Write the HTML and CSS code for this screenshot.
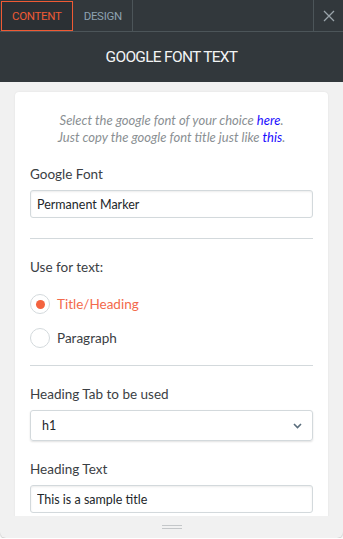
FILE: index.html
```html
<!DOCTYPE html>
<html lang="en">
<head>
    <meta charset="UTF-8">
    <meta name="viewport" content="width=device-width, initial-scale=1.0">
    <title>Google Font Text</title>
    <link rel="stylesheet" href="styles.css">
</head>
<body>
    <div class="panel">
        <div class="tab-bar">
            <button class="tab active">CONTENT</button>
            <button class="tab">DESIGN</button>
            <div class="tab-spacer"></div>
            <button class="close-btn" aria-label="Close">
                <svg width="12" height="12" viewBox="0 0 12 12">
                    <path d="M1 1L11 11M11 1L1 11" stroke="#9aa4aa" stroke-width="1.3" fill="none"/>
                </svg>
            </button>
        </div>
        <div class="panel-title">GOOGLE FONT TEXT</div>

        <div class="panel-body">
            <div class="card">
                <p class="hint">
                    Select the google font of your choice <a href="#">here</a>.<br>
                    Just copy the google font title just like <a href="#">this</a>.
                </p>

                <div class="field">
                    <label class="field-label">Google Font</label>
                    <input type="text" class="text-input" value="Permanent Marker">
                </div>

                <hr class="divider">

                <div class="field field-radios">
                    <label class="field-label">Use for text:</label>
                    <div class="radio-list">
                        <label class="radio checked"><span class="radio-dot"></span>Title/Heading</label>
                        <label class="radio"><span class="radio-dot"></span>Paragraph</label>
                    </div>
                </div>

                <hr class="divider">

                <div class="field">
                    <label class="field-label">Heading Tab to be used</label>
                    <div class="select">
                        <span>h1</span>
                        <svg width="9" height="6" viewBox="0 0 9 6">
                            <path d="M1 1L4.5 4.5L8 1" stroke="#5a6d7c" stroke-width="1.6" fill="none"/>
                        </svg>
                    </div>
                </div>

                <div class="field">
                    <label class="field-label">Heading Text</label>
                    <input type="text" class="text-input" value="This is a sample title">
                </div>
            </div>
        </div>

        <div class="panel-footer">
            <span class="handle"></span>
        </div>
    </div>
</body>
</html>
```

FILE: styles.css
```css
body {
    margin: 0;
    background: #ffffff;
    font-family: Lato, "Open Sans", sans-serif;
}
.panel {
    width: 343px;
    height: 538px;
    display: flex;
    flex-direction: column;
    background: #f1f1f1;
    border-radius: 0 0 6px 6px;
    box-shadow: 0 1px 2px rgba(0, 0, 0, 0.25);
    overflow: hidden;
}
.tab-bar {
    display: flex;
    height: 32px;
    background: #32383c;
    border-bottom: 1px solid #4c5559;
    box-sizing: border-box;
}
.tab {
    border: none;
    background: none;
    font-family: Roboto, sans-serif;
    font-size: 11.5px;
    letter-spacing: -0.3px;
    color: #8ea2b0;
    padding: 0 10px;
    border-right: 1px solid #4c5559;
    cursor: pointer;
}
.tab.active {
    color: #ef5a34;
    border: 1px solid #ef5a34;
    margin: 1px 1px 0 1px;
    height: 30px;
    background: #2b3034;
}
.tab-spacer {
    flex: 1;
}
.close-btn {
    width: 30px;
    border: none;
    border-left: 1px solid #4c5559;
    background: none;
    display: flex;
    align-items: center;
    justify-content: center;
    padding: 0;
}
.panel-title {
    height: 50px;
    background: #32383c;
    color: #f2f4f5;
    font-family: Roboto, sans-serif;
    font-size: 15.5px;
    letter-spacing: -0.7px;
    display: flex;
    align-items: center;
    justify-content: center;
}
.panel-body {
    flex: 1;
    overflow: hidden;
    padding: 10px 15px 0;
}
.card {
    background: #ffffff;
    border-radius: 4px;
    box-shadow: 0 0 2px rgba(0, 0, 0, 0.08);
    padding: 20px 15px 20px;
}
.hint {
    margin: 0 0 20px;
    text-align: center;
    font-style: italic;
    font-size: 13px;
    line-height: 17px;
    color: #8a8f93;
}
.hint a {
    color: #1a0dff;
    text-decoration: none;
}
.field {
    margin-bottom: 20px;
}
.field-radios {
    margin-bottom: 17px;
}
.field-label {
    display: block;
    font-size: 13.5px;
    line-height: 17px;
    color: #3b4044;
    margin-bottom: 7px;
}
.text-input {
    width: 100%;
    box-sizing: border-box;
    height: 28px;
    border: 1px solid #d3d9dc;
    border-radius: 3px;
    box-shadow: inset 0 1px 2px rgba(0, 0, 0, 0.08);
    padding: 0 6px;
    font-family: Lato, sans-serif;
    font-size: 12.5px;
    color: #22262a;
}
.divider {
    border: none;
    border-top: 1px solid #d3d9dc;
    margin: 0 0 20px;
}
.radio-list {
    display: flex;
    flex-direction: column;
    gap: 14px;
    margin-top: 18px;
}
.radio {
    display: flex;
    align-items: center;
    gap: 7px;
    font-size: 13.5px;
    color: #3b4044;
}
.radio.checked {
    color: #f36a4c;
}
.radio-dot {
    width: 20px;
    height: 20px;
    box-sizing: border-box;
    border: 1px solid #d3d9dc;
    border-radius: 50%;
    display: flex;
    align-items: center;
    justify-content: center;
}
.radio.checked .radio-dot::after {
    content: "";
    width: 9px;
    height: 9px;
    border-radius: 50%;
    background: #f3633f;
}
.select {
    height: 31px;
    box-sizing: border-box;
    border: 1px solid #d3d9dc;
    border-radius: 3px;
    box-shadow: 0 1px 2px rgba(0, 0, 0, 0.12);
    display: flex;
    align-items: center;
    justify-content: space-between;
    padding: 0 10px 0 11px;
    font-size: 12.5px;
    color: #22262a;
}
.panel-footer {
    height: 22px;
    display: flex;
    align-items: center;
    justify-content: center;
}
.handle {
    width: 20px;
    height: 2px;
    border-top: 1px solid #c4c7c9;
    border-bottom: 1px solid #c4c7c9;
}
```
